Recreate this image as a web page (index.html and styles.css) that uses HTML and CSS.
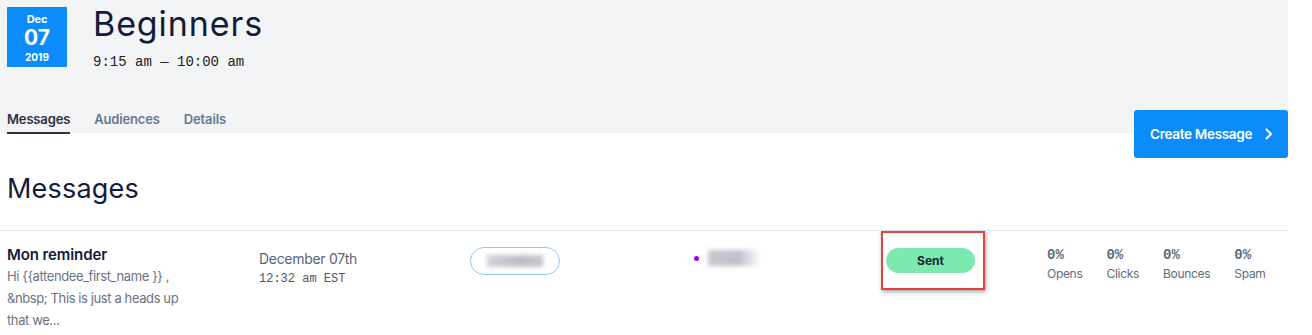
FILE: index.html
```html
<!DOCTYPE html>
<html>
<head>
<meta charset="utf-8">
<link rel="stylesheet" href="styles.css">
</head>
<body>
<div class="page">
  <header class="event-header">
    <div class="event-top">
      <div class="date-box">
        <span class="date-month">Dec</span>
        <span class="date-day">07</span>
        <span class="date-year">2019</span>
      </div>
      <div class="event-title-block">
        <h1 class="event-title">Beginners</h1>
        <div class="event-time">9:15 am — 10:00 am</div>
      </div>
    </div>
    <div class="tabs-row">
      <nav class="tabs">
        <a class="tab active">Messages</a>
        <a class="tab">Audiences</a>
        <a class="tab">Details</a>
      </nav>
      <button class="create-btn">Create Message
        <svg class="chev" width="8" height="12" viewBox="0 0 8 12"><path d="M1.5 1.5 L6 6 L1.5 10.5" fill="none" stroke="#fff" stroke-width="2" stroke-linecap="round" stroke-linejoin="round"/></svg>
      </button>
    </div>
  </header>

  <main class="content">
    <h2 class="section-title">Messages</h2>
    <div class="message-row">
      <div class="col-name">
        <div class="msg-name">Mon reminder</div>
        <div class="msg-preview">Hi {{attendee_first_name }} , &amp;nbsp; This is just a heads up that we...</div>
      </div>
      <div class="col-date">
        <div class="msg-date">December 07th</div>
        <div class="msg-time">12:32 am EST</div>
      </div>
      <div class="col-audience">
        <span class="audience-pill"><span class="blur blur-a"></span></span>
      </div>
      <div class="col-sender">
        <span class="dot"></span><span class="blur blur-b"></span>
      </div>
      <div class="col-status">
        <div class="highlight">
          <span class="sent-pill">Sent</span>
        </div>
      </div>
      <div class="col-stats">
        <div class="stat"><div class="stat-val">0%</div><div class="stat-label">Opens</div></div>
        <div class="stat"><div class="stat-val">0%</div><div class="stat-label">Clicks</div></div>
        <div class="stat"><div class="stat-val">0%</div><div class="stat-label">Bounces</div></div>
        <div class="stat"><div class="stat-val">0%</div><div class="stat-label">Spam</div></div>
      </div>
    </div>
  </main>
</div>
</body>
</html>
```

FILE: styles.css
```css
* { box-sizing: border-box; }
html, body { margin: 0; padding: 0; background: #fff; }
body { font-family: "Inter", "Liberation Sans", sans-serif; color: #141a3c; }

.page { width: 1288px; }

.event-header {
  background: #f3f4f6;
  padding: 7px 0 0 7px;
  height: 133px;
}
.event-top { display: flex; align-items: flex-start; }
.date-box {
  width: 60px; height: 60px;
  background: #0b8cfa;
  color: #fff;
  display: flex; flex-direction: column; align-items: center;
  font-weight: 700;
  padding-top: 6px;
}
.date-month { font-size: 11px; line-height: 12px; letter-spacing: -0.2px; }
.date-day { font-size: 21px; line-height: 24px; margin-top: 1px; }
.date-year { font-size: 10px; line-height: 12px; margin-top: 1px; }

.event-title-block { margin-left: 26px; }
.event-title {
  margin: 0;
  font-size: 34px; font-weight: 400; line-height: 38px;
  color: #141a3c;
  letter-spacing: 0.9px;
  margin-top: -2px;
}
.event-time {
  font-family: "Liberation Mono", "DejaVu Sans Mono", monospace;
  font-size: 14px; line-height: 16px; color: #222;
  margin-top: 11px;
}

.tabs-row {
  display: flex; justify-content: space-between; align-items: flex-start;
  margin-top: 38px;
}
.tabs { display: flex; gap: 24px; padding-top: 4px; }
.tab {
  font-size: 13px; font-weight: 600; color: #69778c;
  padding-bottom: 5px;
  border-bottom: 2px solid transparent;
  line-height: 15px;
  letter-spacing: -0.15px;
}
.tab.active { color: #2d3142; border-bottom-color: #2d3142; }

.create-btn {
  width: 154px; height: 48px;
  background: #0b8cfa; color: #fff;
  border: 0; border-radius: 3px;
  font-family: inherit; font-size: 13.5px; font-weight: 600;
  display: flex; align-items: center; justify-content: flex-start;
  padding: 0 0 0 16px; gap: 0;
  margin-top: 2px;
  letter-spacing: -0.3px;
  position: relative; z-index: 1;
}
.create-btn .chev { margin-left: 13px; }

.content { padding-left: 7px; }
.section-title {
  margin: 0;
  padding-top: 39px;
  font-size: 27px; font-weight: 400; line-height: 34px;
  color: #141a3c;
  letter-spacing: 0.2px;
}

.message-row {
  margin-top: 24px;
  margin-left: -7px;
  padding-left: 7px;
  border-top: 1px solid #dfe7ef;
  display: grid;
  grid-template-columns: 252px 211px 224px 187px 166px 1fr;
  align-items: start;
}
.col-name { padding-top: 14px; }
.msg-name { font-size: 15px; font-weight: 600; color: #141a3c; line-height: 20px; letter-spacing: -0.1px; }
.msg-preview {
  width: 178px;
  font-size: 13px; line-height: 22px; color: #6b7383;
  margin-top: 0;
  letter-spacing: -0.4px;
}
.col-date { padding-top: 19px; }
.msg-date { font-size: 14px; color: #5b6478; line-height: 18px; letter-spacing: -0.3px; }
.msg-time {
  font-family: "Liberation Mono", "DejaVu Sans Mono", monospace;
  font-size: 12px; color: #555; margin-top: 4px; line-height: 14px;
}
.col-audience { padding-top: 16px; }
.audience-pill {
  display: flex; align-items: center; justify-content: center;
  width: 90px; height: 28px;
  border: 1px solid #8fcbfa; border-radius: 14px;
}
.blur { display: inline-block; background: #c2c2cc; filter: blur(2px); }
.blur-a { width: 56px; height: 12px; background: linear-gradient(90deg,#d2d2da,#bdbdc8 60%,#c8c8d0); }
.col-sender { padding-top: 19px; display: flex; align-items: center; }
.dot { width: 5px; height: 5px; border-radius: 50%; background: #9a00ff; margin-right: 9px; }
.blur-b { width: 52px; height: 16px; background: linear-gradient(90deg,#c8c8d0,#c0c0ca 60%,#fff); }
.col-status { padding-top: 0; }
.highlight {
  width: 104px; height: 59px;
  border: 2px solid #e8403d;
  box-shadow: 1px 2px 4px rgba(0,0,0,0.35);
  padding: 15px 0 0 3px;
}
.sent-pill {
  display: flex; align-items: center; justify-content: center;
  width: 89px; height: 25px; border-radius: 13px;
  background: #7ce9b1; color: #16213a;
  font-size: 12px; font-weight: 700;
}
.col-stats { display: flex; gap: 24px; padding-top: 17px; padding-left: 0; }
.stat-val {
  font-family: "Liberation Mono", "DejaVu Sans Mono", monospace;
  font-size: 14px; font-weight: 700; color: #5e6b7c; line-height: 15px;
}
.stat-label { font-size: 12px; color: #5e6b7c; line-height: 15px; margin-top: 3px; letter-spacing: -0.3px; }
```
